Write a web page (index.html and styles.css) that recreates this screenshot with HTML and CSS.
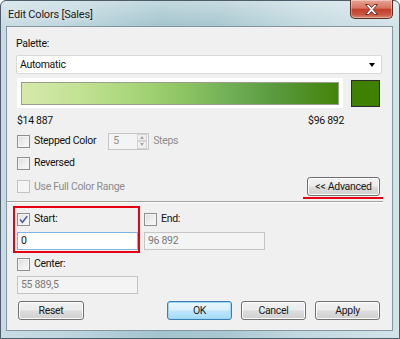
FILE: index.html
```html
<!DOCTYPE html>
<html lang="en">
<head>
  <meta charset="UTF-8" />
  <title>Edit Colors [Sales]</title>
  <link rel="stylesheet" href="styles.css">
</head>
<body>
  <div class="window">
    <div class="titlebar">
      <span class="title">Edit Colors [Sales]</span>
      <div class="close-btn">
        <svg width="15" height="11" viewBox="0 0 15 11">
          <path d="M1.5 0.5h3.2l2.8 3 2.8-3h3.2l-4.4 5 4.4 5h-3.2l-2.8-3-2.8 3h-3.2l4.4-5z" fill="#fff" stroke="#6b2417" stroke-width="0.9"/>
        </svg>
      </div>
    </div>

    <div class="client">
      <div class="label">Palette:</div>
      <div class="select">
        <span>Automatic</span>
        <span class="arrow"></span>
      </div>

      <div class="ramp-row">
        <div class="ramp"><div class="ramp-fill"></div></div>
        <div class="swatch"></div>
      </div>
      <div class="range-values">
        <span>$14 887</span>
        <span>$96 892</span>
      </div>

      <div class="option stepped">
        <span class="check"></span>
        <span>Stepped Color</span>
        <div class="spinner">
          <span>5</span>
          <div class="spin-btns">
            <span class="spin up"></span>
            <span class="spin down"></span>
          </div>
        </div>
        <span class="muted">Steps</span>
      </div>

      <div class="option reversed">
        <span class="check"></span>
        <span>Reversed</span>
      </div>

      <div class="option full-range">
        <span class="check disabled"></span>
        <span class="muted">Use Full Color Range</span>
        <button class="btn advanced">&lt;&lt; Advanced</button>
      </div>

      <div class="separator"></div>

      <div class="limits">
        <div class="limit start">
          <div class="option">
            <span class="check checked">
              <svg width="11" height="11" viewBox="0 0 11 11"><path d="M2 5.5l2.4 2.8 4.8-6" fill="none" stroke="#4b5f8c" stroke-width="1.5"/></svg>
            </span>
            <span>Start:</span>
          </div>
          <div class="field focused">0</div>
        </div>
        <div class="limit end">
          <div class="option">
            <span class="check"></span>
            <span>End:</span>
          </div>
          <div class="field disabled">96 892</div>
        </div>
        <div class="limit center">
          <div class="option">
            <span class="check"></span>
            <span>Center:</span>
          </div>
          <div class="field disabled">55 889,5</div>
        </div>
      </div>

      <div class="actions">
        <button class="btn reset">Reset</button>
        <div class="right-buttons">
          <button class="btn default">OK</button>
          <button class="btn">Cancel</button>
          <button class="btn">Apply</button>
        </div>
      </div>
    </div>
  </div>
</body>
</html>
```

FILE: styles.css
```css
* {
  box-sizing: border-box;
}

body {
  margin: 0;
  background: #fff;
  font-family: Roboto, "Liberation Sans", sans-serif;
  font-size: 10.5px;
  letter-spacing: -0.3px;
  color: #111;
}

.window {
  width: 400px;
  height: 339px;
  display: flex;
  flex-direction: column;
  padding: 0 6px 7px 5px;
  border: 1px solid #4d5d69;
  border-radius: 6px 6px 0 0;
  background:
    linear-gradient(180deg, rgba(255,255,255,0.35) 0, rgba(255,255,255,0) 26px),
    linear-gradient(90deg, #c9dce3 0%, #bcd5dd 18%, #a3c4ce 40%, #a9c7d0 55%, #c1d8df 75%, #d3e4e9 100%);
}

.titlebar {
  height: 25px;
  display: flex;
  justify-content: space-between;
  align-items: flex-start;
}

.title {
  margin: 7px 0 0 2px;
  font-size: 11px;
  letter-spacing: -0.2px;
  color: #1a1a1a;
  text-shadow: 0 0 6px rgba(255,255,255,0.9);
}

.close-btn {
  width: 43px;
  height: 19px;
  margin-top: -1px;
  display: flex;
  align-items: center;
  justify-content: center;
  border: 1px solid #5e2a22;
  border-top: none;
  border-radius: 0 0 5px 5px;
  background: linear-gradient(180deg, #e8a597 0%, #d7735f 45%, #c2412a 52%, #c8553f 80%, #d88a72 100%);
  box-shadow: inset 0 0 0 1px rgba(255,255,255,0.35);
}

.client {
  flex: 1;
  display: flex;
  flex-direction: column;
  padding: 10px 10px 0 9px;
  border: 1px solid #8496a3;
  background: #f0f0f0;
}

.label {
  line-height: 14px;
}

.select {
  height: 19px;
  margin-top: 4px;
  display: flex;
  align-items: center;
  justify-content: space-between;
  padding: 0 6px 0 3px;
  background: #fff;
  border: 1px solid #d9d9d9;
  border-radius: 2px;
}

.arrow {
  width: 0;
  height: 0;
  border-left: 3.5px solid transparent;
  border-right: 3.5px solid transparent;
  border-top: 4px solid #000;
}

.ramp-row {
  display: flex;
  align-items: center;
  margin-top: 4px;
}

.ramp {
  width: 326px;
  height: 30px;
  margin-left: 1px;
  padding: 4px 4px 3px 4px;
  background: #fff;
}

.ramp-fill {
  height: 100%;
  border: 1px solid #9c9c8c;
  background: linear-gradient(90deg, #d5e9ab 0%, #c2e294 18%, #a9d67a 35%, #8fc664 50%, #72b057 65%, #5a9a3e 80%, #448309 100%);
}

.swatch {
  width: 29px;
  height: 27px;
  margin-left: 8px;
  border: 1px solid #2b2b2b;
  background: #408000;
}

.range-values {
  width: 327px;
  margin: 6px 0 0 1px;
  display: flex;
  justify-content: space-between;
  line-height: 14px;
}

.option {
  display: flex;
  align-items: center;
  gap: 4px;
  line-height: 14px;
  padding-left: 1px;
}

.check {
  width: 13px;
  height: 13px;
  flex-shrink: 0;
  display: flex;
  align-items: center;
  justify-content: center;
  border: 1px solid #8e8f8f;
  background: linear-gradient(135deg, #dcdcdc 0%, #f0f0f0 60%, #fbfbfb 100%);
  box-shadow: inset 0 0 0 1px #f4f4f4;
}

.check.checked {
  background: linear-gradient(135deg, #e4e4e4 0%, #f6f6f6 100%);
}

.check.disabled {
  border-color: #c4c4c4;
  background: #f4f4f4;
}

.muted {
  color: #8d8d8d;
}

.stepped {
  margin-top: 4px;
  height: 18px;
}

.spinner {
  width: 41px;
  height: 17px;
  margin-left: 8px;
  display: flex;
  align-items: center;
  justify-content: space-between;
  padding-left: 4px;
  border: 1px solid #c6c6c6;
  background: #f4f4f4;
  color: #8d8d8d;
}

.spin-btns {
  width: 10px;
  height: 15px;
  display: flex;
  flex-direction: column;
  margin-right: 1px;
}

.spin {
  flex: 1;
  display: flex;
  align-items: center;
  justify-content: center;
  border: 1px solid #d3d3d3;
  background: #f0f0f0;
}

.spin::after {
  content: "";
  border-left: 2.5px solid transparent;
  border-right: 2.5px solid transparent;
}

.spin.up::after {
  border-bottom: 3px solid #a5a5a5;
}

.spin.down::after {
  border-top: 3px solid #a5a5a5;
}

.reversed {
  margin-top: 6px;
}

.full-range {
  margin-top: 7px;
  height: 19px;
}

.btn {
  height: 19px;
  padding: 0;
  font-family: Roboto, "Liberation Sans", sans-serif;
  font-size: 10.5px;
  letter-spacing: -0.3px;
  color: #1a1a1a;
  border: 1px solid #707070;
  border-radius: 3px;
  background: linear-gradient(180deg, #f2f2f2 0%, #ebebeb 48%, #dddddd 52%, #cfcfcf 100%);
  box-shadow: inset 0 0 0 1px #fcfcfc;
}

.advanced {
  position: relative;
  width: 73px;
  margin-left: auto;
  margin-right: 2px;
}

.advanced::after {
  content: "";
  position: absolute;
  left: -5px;
  right: -4px;
  bottom: -4px;
  height: 2px;
  background: #e60012;
}

.separator {
  height: 2px;
  margin: 5px -1px 0 -9px;
  border-top: 1px solid #a0a0a0;
  border-bottom: 1px solid #fff;
}

.limits {
  margin: 9px 0 0 1px;
  display: grid;
  grid-template-columns: 121px 121px;
  column-gap: 6px;
  row-gap: 7px;
}

.limit .option {
  padding-left: 0;
}

.start {
  position: relative;
}

.start::after {
  content: "";
  position: absolute;
  top: -6px;
  left: -4px;
  right: -2px;
  bottom: -3px;
  border: 2px solid #e60012;
  pointer-events: none;
}

.field {
  height: 18px;
  margin-top: 6px;
  padding-left: 3px;
  line-height: 16px;
  border: 1px solid #abadb3;
  background: #fff;
}

.field.focused {
  border-color: #7eb4e3;
}

.field.disabled {
  border-color: #c4c4c4;
  background: #f4f4f4;
  color: #7a7a7a;
}

.center .field {
  margin-top: 5px;
}

.actions {
  margin-top: 7px;
  display: flex;
  justify-content: space-between;
}

.reset {
  width: 66px;
  margin-left: 2px;
}

.right-buttons {
  display: flex;
  gap: 9px;
  margin-right: 2px;
}

.right-buttons .btn {
  width: 65px;
}

.btn.default {
  border-color: #3c7fb1;
  background: linear-gradient(180deg, #eaf6fd 0%, #d9f0fc 48%, #bee6fd 52%, #a7d9f5 100%);
  box-shadow: inset 0 0 0 1px #9ad6f5;
}
```
